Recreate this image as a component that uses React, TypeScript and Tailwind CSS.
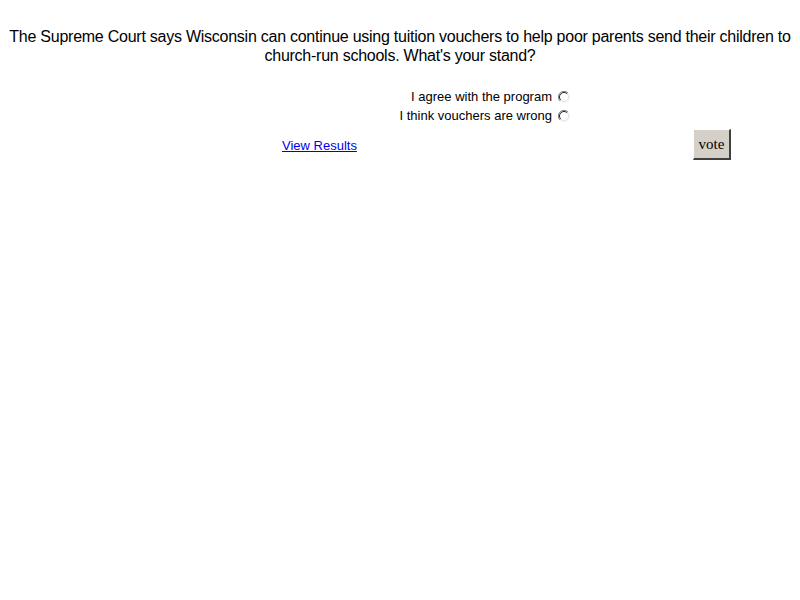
const Radio = () => (
  <svg width="12" height="12" viewBox="0 0 12 12" className="shrink-0">
    <circle cx="6" cy="6" r="5.5" fill="#ffffff" />
    <path d="M10 2 A5.5 5.5 0 0 0 2 10" fill="none" stroke="#808080" strokeWidth="1" />
    <path d="M9.2 2.8 A4.5 4.5 0 0 0 2.8 9.2" fill="none" stroke="#202020" strokeWidth="1" />
    <path d="M2 10 A5.5 5.5 0 0 0 10 2" fill="none" stroke="#f4f4f4" strokeWidth="1" />
    <path d="M2.8 9.2 A4.5 4.5 0 0 0 9.2 2.8" fill="none" stroke="#e4e2dc" strokeWidth="1" />
  </svg>
);

export default function App() {
  return (
    <div className="w-[800px] h-[600px] bg-white font-['Liberation_Sans',Arial,sans-serif] text-black">
      <p className="pt-[27px] px-[6px] text-center text-[16px] leading-[19px] tracking-[-0.25px]">
        The Supreme Court says Wisconsin can continue using tuition vouchers to help poor parents send
        their children to church-run schools. What's your stand?
      </p>

      <div className="mt-[24px] w-[570px] flex flex-col items-end gap-[4px] text-[13px] leading-[15px]">
        <label className="flex items-center gap-[6px]">
          <span>I agree with the program</span>
          <Radio />
        </label>
        <label className="flex items-center gap-[6px]">
          <span>I think vouchers are wrong</span>
          <Radio />
        </label>
      </div>

      <div className="mt-[6px] flex items-center pl-[282px] pr-[69px]">
        <a href="#" className="text-[13px] text-[#0000ee] underline mt-[2px]">
          View Results
        </a>
        <button className="ml-auto w-[38px] h-[31px] bg-[#d4d0c8] font-['Liberation_Serif','Times_New_Roman',serif] text-[15px] border-t border-l border-t-white border-l-white border-r-2 border-b-2 border-r-[#404040] border-b-[#404040]">
          vote
        </button>
      </div>
    </div>
  );
}
